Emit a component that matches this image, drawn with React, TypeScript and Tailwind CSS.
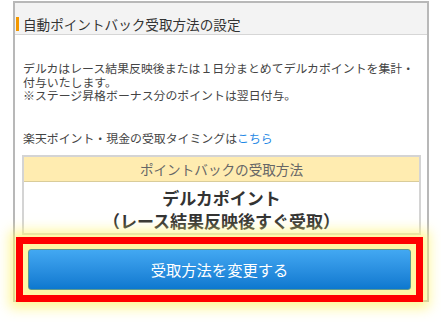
const font = "font-['Noto_Sans_CJK_JP','Noto_Sans',sans-serif]"

export default function App() {
  return (
    <div className={`w-[441px] h-[322px] bg-white pt-px pl-[13px] ${font}`}>
      <div className="w-[416px] border-2 border-[#b8b8b8] bg-white">
        {/* title bar */}
        <div className="flex items-center bg-[#f3f3f3] border-b border-[#d6d6d6] pt-[13px] pb-[2px]">
          <span className="ml-px w-[3px] h-[14px] bg-[#f39800]" />
          <h2 className="ml-[4px] text-[13.6px] leading-[16px] text-[#333]">自動ポイントバック受取方法の設定</h2>
        </div>

        <div className="pl-2 pr-[4px]">
          <p className="pt-[26px] text-[11.9px] leading-[13.5px] text-[#444]">
            デルカはレース結果反映後または１日分まとめてデルカポイントを集計・
            <br />
            付与いたします。
            <br />
            ※ステージ昇格ボーナス分のポイントは翌日付与。
          </p>
          <p className="mt-[29px] text-[11.9px] leading-[13.5px] text-[#444]">
            楽天ポイント・現金の受取タイミングは
            <a className="text-[#1e88e5]">こちら</a>
          </p>

          <div className="mt-[11px] mr-[2px] -ml-px border-2 border-[#d4d4d4]">
            <div className="bg-[#ffecb0] border-b border-[#d9cc9a] text-center text-[13.6px] leading-[24px] text-[#666]">
              ポイントバックの受取方法
            </div>
            <div className="pt-[4px] pb-px text-center text-[17px] leading-[23px] font-bold text-[#333]">
              デルカポイント
              <br />
              （レース結果反映後すぐ受取）
            </div>
          </div>
        </div>

        <div className="relative mt-[2px] -mb-[2px] ml-px w-[407px] border-[7px] border-[#ff0000] bg-[#fff7a6] p-[5px] shadow-[0_0_12px_6px_rgba(255,244,120,0.8)]">
          <button className="flex h-[41px] w-full items-center justify-center rounded-[3px] border border-[#5e9a90] bg-gradient-to-b from-[#42a8f2] to-[#0c78cf] text-[15.3px] text-white">
            受取方法を変更する
          </button>
        </div>
      </div>
    </div>
  )
}
